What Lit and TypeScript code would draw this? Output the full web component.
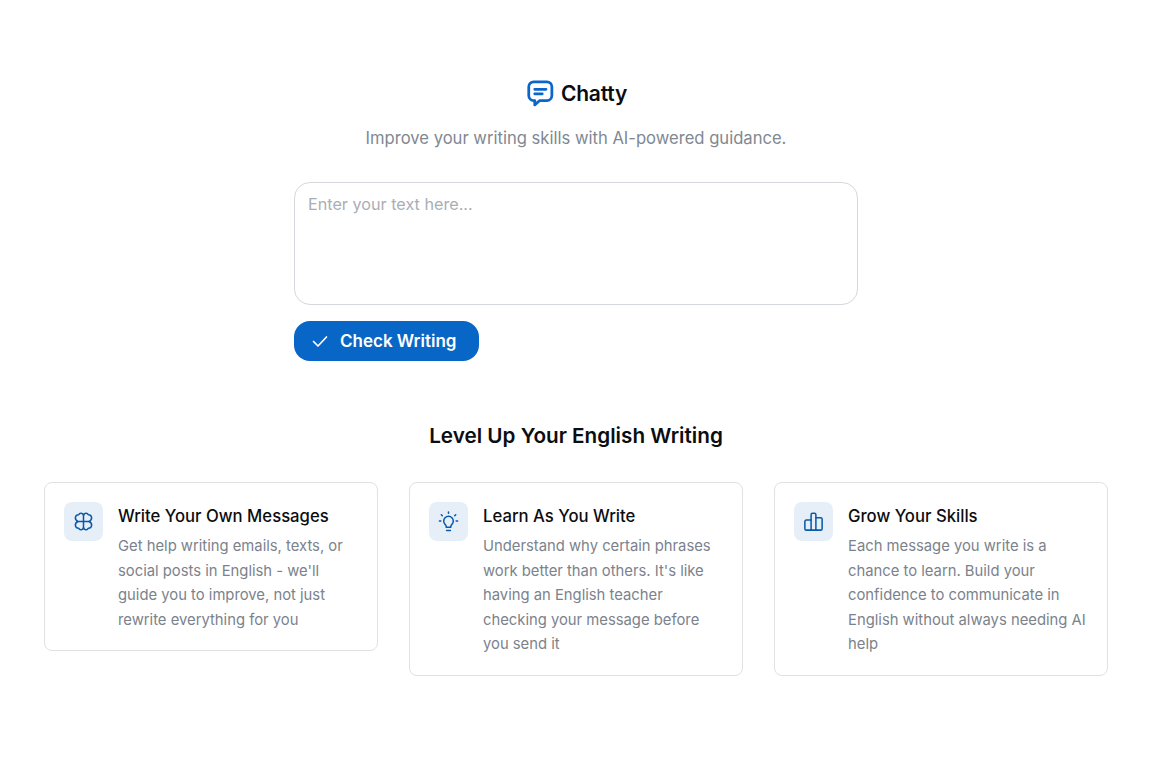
import { css, html, LitElement, svg } from "lit";
import { customElement } from "lit/decorators.js";

const brain = svg`
  <path d="M12 5.500C11.500 3 8 2.500 7 5C3.500 4.800 1.800 9.500 6 12C1.800 14.500 3.500 19.200 7 19C8 21.500 11.500 21 12 18.500V5.500z" />
  <path d="M12 5.500C12.500 3 16 2.500 17 5C20.500 4.800 22.200 9.500 18 12C22.200 14.500 20.500 19.200 17 19C16 21.500 12.500 21 12 18.500" />
  <path d="M6 12H18" />
`;
const bulb = svg`
  <path d="M8.600 15.200a5 5 0 1 1 6.800 0c-.6.6-1 1.200-1 2v.8H9.600v-.8c0-.8-.4-1.400-1-2z" />
  <path d="M10 21.500h4M12 2v1.500M4.500 5l1 1M19.500 5l-1 1M2.500 11.500H4M20 11.500h1.500" />
`;
const bars = svg`
  <path d="M9.500 21V5A1.500 1.500 0 0 1 11 3.500h2A1.500 1.500 0 0 1 14.500 5v16" />
  <path d="M9.500 21H4.500A1.500 1.500 0 0 1 3 19.500V12a1.500 1.500 0 0 1 1.500-1.500h5" />
  <path d="M14.500 21h5a1.500 1.500 0 0 0 1.500-1.500V9.500A1.500 1.500 0 0 0 19.500 8h-5" />
  <path d="M9.500 21h5" />
`;

const features = [
  {
    icon: brain,
    title: "Write Your Own Messages",
    text: "Get help writing emails, texts, or social posts in English - we'll guide you to improve, not just rewrite everything for you",
  },
  {
    icon: bulb,
    title: "Learn As You Write",
    text: "Understand why certain phrases work better than others. It's like having an English teacher checking your message before you send it",
  },
  {
    icon: bars,
    title: "Grow Your Skills",
    text: "Each message you write is a chance to learn. Build your confidence to communicate in English without always needing AI help",
  },
];

@customElement("app-root")
export class AppRoot extends LitElement {
  static styles = css`
    :host {
      display: block;
      min-height: 768px;
      background: #ffffff;
      font-family: Inter, "Liberation Sans", sans-serif;
      color: #0b0d10;
    }

    main {
      box-sizing: border-box;
      padding: 77px 44px 0;
    }

    .brand {
      display: flex;
      align-items: center;
      justify-content: center;
      gap: 6px;
      height: 32px;
    }

    .brand svg {
      width: 30px;
      height: 30px;
      fill: none;
      stroke: #0a66c8;
      stroke-width: 2.200;
      stroke-linecap: round;
      stroke-linejoin: round;
    }

    .brand span {
      font-size: 21px;
      font-weight: 600;
      letter-spacing: -0.2px;
    }

    .tagline {
      margin: 16px 0 0;
      text-align: center;
      font-size: 16.600px;
      line-height: 26px;
      color: #808892;
    }

    .composer {
      width: 564px;
      margin: 31px auto 0;
    }

    textarea {
      display: block;
      box-sizing: border-box;
      width: 100%;
      height: 123px;
      padding: 9px 13px;
      border: 1px solid #d5d8dc;
      border-radius: 16px;
      outline: none;
      resize: none;
      font: 400 16.200px/24px Inter, "Liberation Sans", sans-serif;
      background: #fff;
    }

    textarea::placeholder {
      color: #a9aeb5;
      opacity: 1;
    }

    button {
      display: flex;
      align-items: center;
      gap: 10px;
      width: 185px;
      height: 40px;
      margin-top: 16px;
      padding: 0 0 0 16px;
      border: none;
      border-radius: 16px;
      background: #0866c6;
      color: #fff;
      font: 600 17px Inter, "Liberation Sans", sans-serif;
    }

    button svg {
      width: 20px;
      height: 20px;
      fill: none;
      stroke: #fff;
      stroke-width: 1.700;
      stroke-linecap: round;
      stroke-linejoin: round;
    }

    h2 {
      margin: 61px 0 0;
      text-align: center;
      font-size: 20.700px;
      line-height: 28px;
      font-weight: 600;
    }

    .cards {
      display: grid;
      grid-template-columns: repeat(3, 334px);
      gap: 31px;
      align-items: start;
      margin-top: 32px;
    }

    .card {
      display: flex;
      gap: 15px;
      box-sizing: border-box;
      padding: 19px 19px 18px 19px;
      border: 1px solid #dfe1e5;
      border-radius: 8px;
    }

    .icon {
      flex: none;
      display: flex;
      align-items: center;
      justify-content: center;
      width: 39px;
      height: 39px;
      border-radius: 8px;
      background: #e6eff8;
    }

    .icon svg {
      width: 23px;
      height: 23px;
      fill: none;
      stroke: #0a5aa8;
      stroke-width: 1.600;
      stroke-linecap: round;
      stroke-linejoin: round;
    }

    h3 {
      margin: 0;
      font-size: 16.700px;
      line-height: 28px;
      font-weight: 500;
    }

    .card p {
      margin: 4px 0 0;
      font-size: 14.800px;
      line-height: 24.600px;
      color: #7b828c;
    }
  `;

  render() {
    return html`
      <main>
        <div class="brand">
          <svg viewBox="0 0 24 24">
            <path
              d="M7 3h10.500a4 4 0 0 1 4 4v7a4 4 0 0 1-4 4H11.800L7.800 21.500V18H7a4 4 0 0 1-4-4V7a4 4 0 0 1 4-4z"
            />
            <path d="M7.800 9h9M7.800 12.600h6" />
          </svg>
          <span>Chatty</span>
        </div>
        <p class="tagline">Improve your writing skills with AI-powered guidance.</p>
        <div class="composer">
          <textarea placeholder="Enter your text here..."></textarea>
          <button>
            <svg viewBox="0 0 20 20"><path d="M3.500 10.500l4.500 4.500 8.500-9" /></svg>
            Check Writing
          </button>
        </div>
        <h2>Level Up Your English Writing</h2>
        <div class="cards">
          ${features.map(
            (f) => html`
              <div class="card">
                <div class="icon"><svg viewBox="0 0 24 24">${f.icon}</svg></div>
                <div>
                  <h3>${f.title}</h3>
                  <p>${f.text}</p>
                </div>
              </div>
            `,
          )}
        </div>
      </main>
    `;
  }
}
